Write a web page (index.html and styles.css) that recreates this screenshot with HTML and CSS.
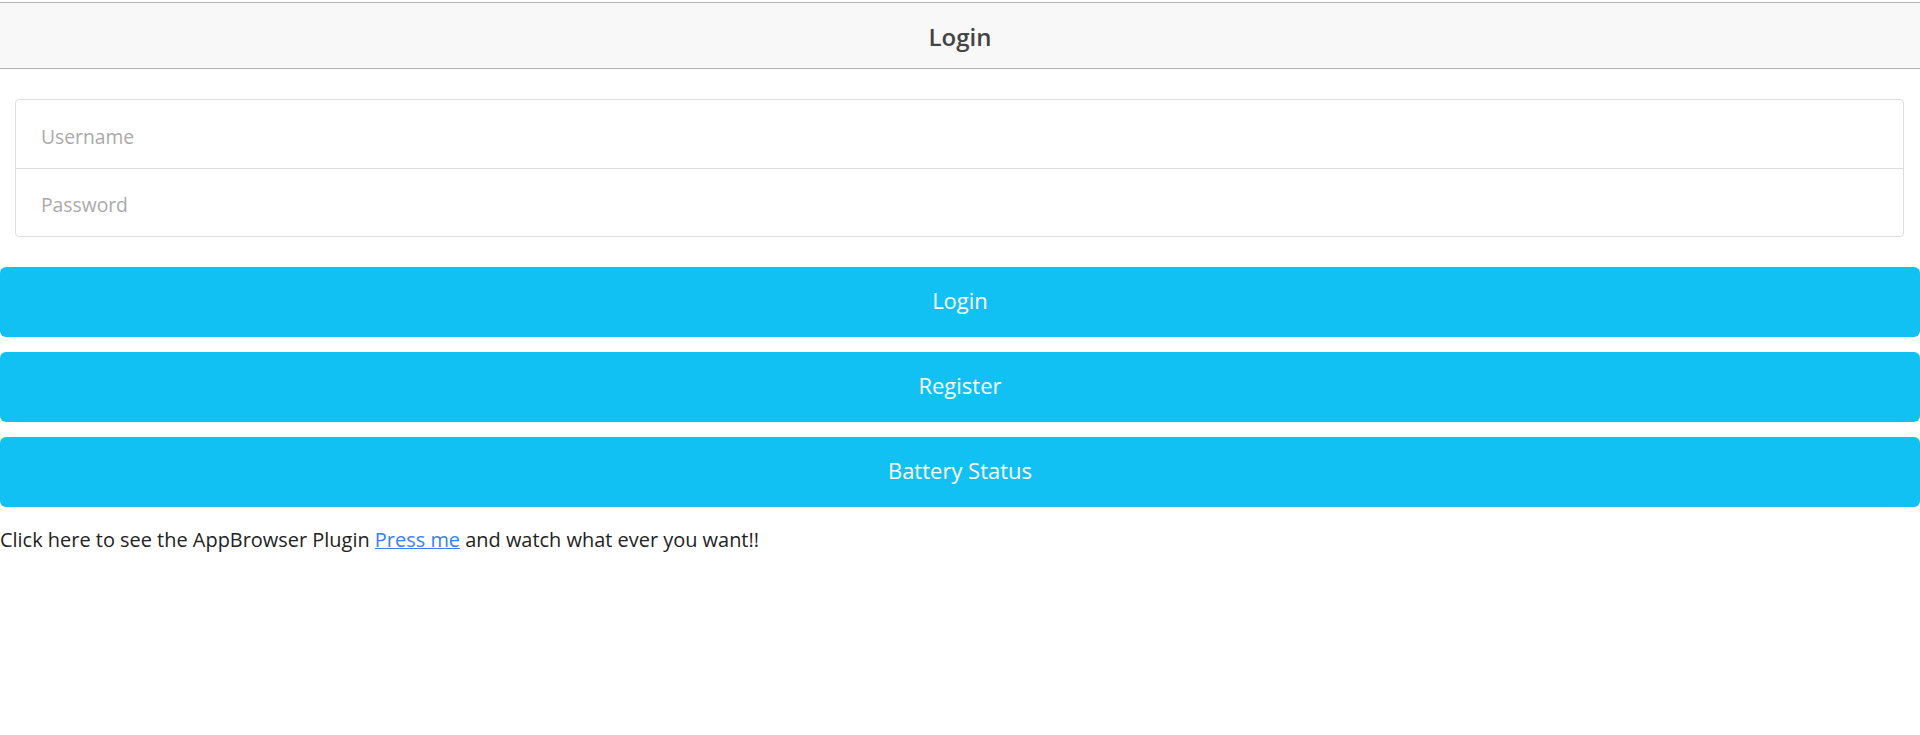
FILE: index.html
```html
<!DOCTYPE html>
<html>
<head>
<meta charset="utf-8">
<title>Login</title>
<link rel="stylesheet" href="styles.css">
</head>
<body>
<header class="bar">
  <h1 class="title">Login</h1>
</header>
<main class="content">
  <div class="list">
    <label class="item"><input class="field" type="text" placeholder="Username"></label>
    <label class="item"><input class="field" type="password" placeholder="Password"></label>
  </div>
  <div class="buttons">
    <button class="btn">Login</button>
    <button class="btn">Register</button>
    <button class="btn">Battery Status</button>
  </div>
  <p class="note">Click here to see the AppBrowser Plugin <a href="#" class="link">Press me</a> and watch what ever you want!!</p>
</main>
</body>
</html>
```

FILE: styles.css
```css
* { box-sizing: border-box; }
html, body {
  margin: 0;
  padding: 0;
  background: #fff;
  font-family: "Open Sans", "Noto Sans", sans-serif;
  color: #222;
}
.bar {
  margin-top: 2px;
  height: 67px;
  background: #f8f8f8;
  border-top: 1px solid #b2b2b2;
  border-bottom: 1px solid #b2b2b2;
  display: flex;
  align-items: center;
  justify-content: center;
  padding-top: 2px;
}
.title {
  margin: 0;
  font-size: 24px;
  font-weight: 600;
  color: #444;
}
.content {
  padding-top: 30px;
}
.list {
  margin: 0 16px 0 15px;
  border: 1px solid #ddd;
  border-radius: 4px;
  background: #fff;
}
.item {
  display: flex;
  align-items: center;
  height: 68px;
  padding: 4px 25px 0;
}
.item + .item {
  border-top: 1px solid #ddd;
}
.field {
  border: 0;
  outline: 0;
  width: 100%;
  font-family: inherit;
  font-size: 19.3px;
  color: #222;
  background: transparent;
  padding: 0;
}
.field::placeholder { color: #aaa; }
.buttons {
  margin-top: 30px;
  display: flex;
  flex-direction: column;
  gap: 15px;
}
.btn {
  height: 70px;
  width: 100%;
  border: 0;
  border-radius: 6px;
  background: #11c1f3;
  color: #fff;
  font-family: inherit;
  font-size: 22px;
  padding: 0 0 4px;
  cursor: pointer;
}
.note {
  margin: 18px 0 0 0;
  font-size: 19.95px;
  line-height: 30px;
  color: #222;
}
.link { color: #387ef5; }
```
